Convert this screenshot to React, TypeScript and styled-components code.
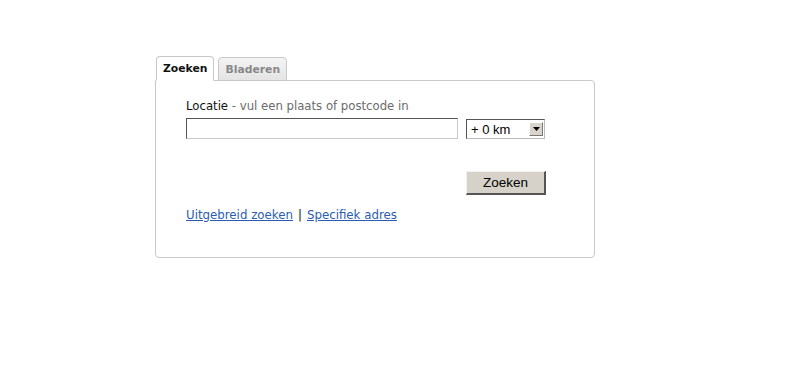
import styled, { createGlobalStyle } from "styled-components";

const GlobalStyle = createGlobalStyle`
  html, body { margin: 0; padding: 0; background: #fff; }
  body { font-family: "DejaVu Sans", Verdana, sans-serif; }
`;

const Page = styled.div`
  width: 801px;
  height: 369px;
  padding: 56px 0 0 155px;
  box-sizing: border-box;
`;

const Tabs = styled.div`
  display: flex;
  gap: 4px;
  padding-left: 1px;
  align-items: flex-end;
  position: relative;
  z-index: 1;
  margin-bottom: -1px;
`;

const Tab = styled.div<{ $active?: boolean }>`
  height: ${(p) => (p.$active ? "25px" : "24px")};
  box-sizing: border-box;
  padding: 0 6px;
  display: flex;
  align-items: center;
  font-size: 10.8px;
  font-weight: bold;
  color: ${(p) => (p.$active ? "#111" : "#888")};
  background: ${(p) => (p.$active ? "#fff" : "linear-gradient(#f4f4f4, #e4e4e4)")};
  border: 1px solid #c8c8c8;
  border-bottom: ${(p) => (p.$active ? "1px solid #fff" : "1px solid #c8c8c8")};
  border-radius: 4px 4px 0 0;
`;

const Panel = styled.div`
  width: 440px;
  height: 178px;
  box-sizing: border-box;
  border: 1px solid #c9c9c9;
  border-radius: 0 4px 4px 4px;
  padding: 18px 30px 0 30px;
`;

const Label = styled.div`
  font-size: 11.7px;
  color: #111;
  line-height: 14px;
  margin-bottom: 5px;
`;

const Hint = styled.span`
  color: #6b6b6b;
`;

const Row = styled.div`
  display: flex;
  align-items: center;
  gap: 8px;
`;

const TextInput = styled.div`
  width: 272px;
  height: 21px;
  box-sizing: border-box;
  border: 1px solid #7a7a7a;
  border-top-color: #555;
  border-left-color: #555;
  border-right-color: #c8c8c8;
  border-bottom-color: #c8c8c8;
  background: #fff;
`;

const Select = styled.div`
  width: 79px;
  height: 20px;
  box-sizing: border-box;
  margin-top: 1px;
  border: 1px solid #555;
  border-right-color: #bbb;
  border-bottom-color: #bbb;
  display: flex;
  align-items: center;
  justify-content: space-between;
  padding: 0 1px 0 4px;
  font-family: "Liberation Sans", Arial, sans-serif;
  font-size: 13px;
  color: #000;
`;

const Arrow = styled.div`
  width: 14px;
  height: 14px;
  box-sizing: border-box;
  background: #d8d4cc;
  border: 1px solid #fff;
  border-right-color: #777;
  border-bottom-color: #777;
  display: flex;
  align-items: center;
  justify-content: center;
`;

const ButtonRow = styled.div`
  display: flex;
  padding-left: 280px;
  margin-top: 32px;
`;

const Button = styled.div`
  width: 80px;
  height: 24px;
  box-sizing: border-box;
  background: #d6d2ca;
  border: 1px solid #f4f2ee;
  border-right: 2px solid #555;
  border-bottom: 2px solid #555;
  display: flex;
  align-items: center;
  justify-content: center;
  font-family: "Liberation Sans", Arial, sans-serif;
  font-size: 13.5px;
  color: #000;
`;

const Links = styled.div`
  margin-top: 13px;
  font-size: 11.8px;
  color: #111;
  display: flex;
  gap: 5px;
`;

const Link = styled.a`
  color: #2a5db0;
  text-decoration: underline;
`;

export default function App() {
  return (
    <>
      <GlobalStyle />
      <Page>
        <Tabs>
          <Tab $active>Zoeken</Tab>
          <Tab>Bladeren</Tab>
        </Tabs>
        <Panel>
          <Label>
            Locatie <Hint>- vul een plaats of postcode in</Hint>
          </Label>
          <Row>
            <TextInput />
            <Select>
              <span>+ 0 km</span>
              <Arrow>
                <svg width="7" height="4" viewBox="0 0 7 4">
                  <path d="M0 0 H7 L3.5 4 Z" fill="#000" />
                </svg>
              </Arrow>
            </Select>
          </Row>
          <ButtonRow>
            <Button>Zoeken</Button>
          </ButtonRow>
          <Links>
            <Link href="#">Uitgebreid zoeken</Link>
            <span>|</span>
            <Link href="#">Specifiek adres</Link>
          </Links>
        </Panel>
      </Page>
    </>
  );
}
